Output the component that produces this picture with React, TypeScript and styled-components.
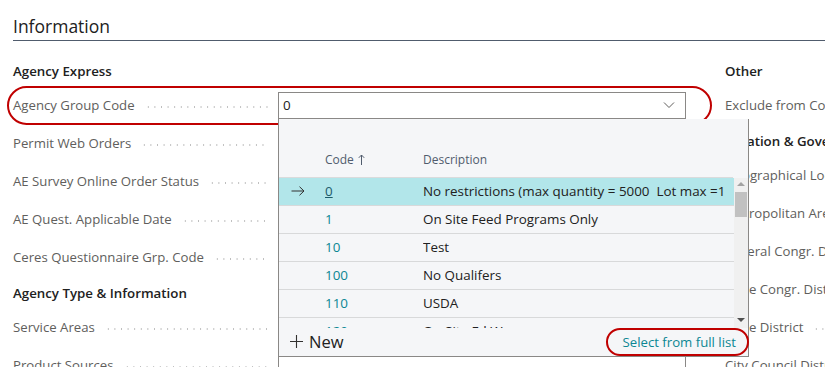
import React from 'react';
import styled, {createGlobalStyle} from 'styled-components';

const GlobalStyle = createGlobalStyle`
  body {
    margin: 0;
    font-family: "Open Sans", "Noto Sans", sans-serif;
    background: #fff;
  }
`;

const leftGroups = [
    {
        title: 'Agency Express',
        fields: ['Agency Group Code', 'Permit Web Orders', 'AE Survey Online Order Status', 'AE Quest. Applicable Date', 'Ceres Questionnaire Grp. Code'],
    },
    {
        title: 'Agency Type & Information',
        fields: ['Service Areas', 'Product Sources'],
    },
];

const rightGroups = [
    {title: 'Other', fields: ['Exclude from Communications']},
    {
        title: 'Location & Government',
        fields: ['Geographical Location', 'Metropolitan Area', 'Federal Congr. District', 'State Congr. District', 'State District', 'City Council District'],
    },
];

const lookupRows = [
    {code: '0', description: 'No restrictions (max quantity = 5000  Lot max =1'},
    {code: '1', description: 'On Site Feed Programs Only'},
    {code: '10', description: 'Test'},
    {code: '100', description: 'No Qualifers'},
    {code: '110', description: 'USDA'},
    {code: '120', description: 'On Site Fd W'},
];

const ChevronDown = () => (
    <svg width="12" height="8" viewBox="0 0 12 8">
        <polyline points="1,1.5 6,6.5 11,1.5" fill="none" stroke="#605e5c" strokeWidth="1"/>
    </svg>
);

const ArrowUp = () => (
    <svg width="7" height="11" viewBox="0 0 7 11">
        <path d="M3.5 1 V11 M0.8 3.8 L3.5 1 L6.2 3.8" fill="none" stroke="#505c6d" strokeWidth="1"/>
    </svg>
);

const ArrowRight = () => (
    <svg width="14" height="10" viewBox="0 0 14 10">
        <path d="M0.5 5 H13 M8.5 0.7 L13 5 L8.5 9.3" fill="none" stroke="#323130" strokeWidth="1"/>
    </svg>
);

const PlusIcon = () => (
    <svg width="13" height="13" viewBox="0 0 13 13">
        <path d="M6.5 0 V13 M0 6.5 H13" fill="none" stroke="#323130" strokeWidth="1.1"/>
    </svg>
);

const LookupPopup = () => (
    <Popup>
        <PopupHeader>
            <span/>
            <HeaderCell>Code <ArrowUp/></HeaderCell>
            <HeaderCell>Description</HeaderCell>
        </PopupHeader>
        <ListArea>
            <Rows>
                {lookupRows.map((row, i) => (
                    <Row key={row.code} $selected={i === 0}>
                        <Marker>{i === 0 && <ArrowRight/>}</Marker>
                        <Code $selected={i === 0}>{row.code}</Code>
                        <Description>{row.description}</Description>
                    </Row>
                ))}
            </Rows>
            <Scrollbar>
                <ScrollArrow $up/>
                <Thumb/>
                <ScrollArrow/>
            </Scrollbar>
        </ListArea>
        <PopupFooter>
            <NewButton><PlusIcon/>New</NewButton>
            <FullListLink>Select from full list</FullListLink>
        </PopupFooter>
    </Popup>
);

const Field = ({label, active}: { label: string, active?: boolean }) => (
    <FieldRow>
        <Caption>
            <span>{label}</span>
            <Leader/>
        </Caption>
        <InputBox>
            {active && <>
                <span>0</span>
                <ChevronDown/>
            </>}
            {active && <LookupPopup/>}
        </InputBox>
        {active && <Highlight/>}
    </FieldRow>
);

export default function App() {
    return (
        <Page>
            <GlobalStyle/>
            <Title>Information</Title>
            <Columns>
                <LeftColumn>
                    {leftGroups.map(group => (
                        <div key={group.title}>
                            <GroupTitle>{group.title}</GroupTitle>
                            {group.fields.map(f => (
                                <Field key={f} label={f} active={f === 'Agency Group Code'}/>
                            ))}
                        </div>
                    ))}
                </LeftColumn>
                <RightColumn>
                    {rightGroups.map(group => (
                        <div key={group.title}>
                            <GroupTitle>{group.title}</GroupTitle>
                            {group.fields.map(f => (
                                <PlainField key={f}>
                                    <span>{f}</span>
                                    <Leader/>
                                </PlainField>
                            ))}
                        </div>
                    ))}
                </RightColumn>
            </Columns>
        </Page>
    );
}

const Page = styled.div`
  width: 825px;
  height: 367px;
  overflow: hidden;
  padding-left: 13px;
  box-sizing: border-box;
  position: relative;
`

const Title = styled.h1`
  margin: 0 0 13px;
  padding-top: 13px;
  font-size: 17.5px;
  line-height: 27px;
  font-weight: 400;
  color: #212121;
  border-bottom: 1px solid #505c6d;
`

const Columns = styled.div`
  display: flex;
  gap: 39px;
`

const LeftColumn = styled.div`
  width: 673px;
  flex: none;
  position: relative;
  z-index: 2;
`

const RightColumn = styled.div`
  width: 260px;
  flex: none;
`

const GroupTitle = styled.div`
  height: 32px;
  padding-top: 7px;
  box-sizing: border-box;
  font-size: 13.3px;
  line-height: 20px;
  font-weight: 600;
  color: #212121;
  white-space: nowrap;
`

const FieldRow = styled.div`
  position: relative;
  height: 38px;
  display: flex;
  align-items: center;
  gap: 10px;
`

const Caption = styled.div`
  width: 255px;
  flex: none;
  display: flex;
  align-items: center;
  font-size: 13.2px;
  color: #605e5c;
  white-space: nowrap;
`

const PlainField = styled(Caption)`
  height: 38px;
  width: 200px;
`

const Leader = styled.span`
  flex: 1;
  height: 2px;
  margin: 3px 0 0 10px;
  background-image: radial-gradient(circle, #bdbdbd 0.7px, transparent 0.9px);
  background-size: 6.6px 2px;
  background-repeat: repeat-x;
`

const InputBox = styled.div`
  position: relative;
  width: 408px;
  height: 27px;
  box-sizing: border-box;
  border: 1px solid #8a8886;
  background: #fff;
  display: flex;
  align-items: center;
  justify-content: space-between;
  padding: 0 10px 0 4px;
  font-size: 13.4px;
  color: #212121;
`

const Highlight = styled.div`
  position: absolute;
  left: -6px;
  top: 0;
  width: 705px;
  height: 39px;
  box-sizing: border-box;
  border: 2.5px solid #c00000;
  border-radius: 20px;
  pointer-events: none;
`

const Popup = styled.div`
  position: absolute;
  left: -1px;
  top: 26px;
  width: 471px;
  height: 238px;
  box-sizing: border-box;
  background: #f5f6f8;
  border: 1px solid #8a8886;
  border-top: none;
  display: flex;
  flex-direction: column;
  z-index: 5;
`

const PopupHeader = styled.div`
  height: 59px;
  flex: none;
  display: grid;
  grid-template-columns: 46px 98px 1fr;
  align-items: end;
  padding-bottom: 8px;
  box-sizing: border-box;
  margin-right: 15px;
  border-bottom: 1px solid #dadbdc;
`

const HeaderCell = styled.span`
  font-size: 12px;
  line-height: 18px;
  color: #505c6d;
  display: flex;
  align-items: center;
  gap: 4px;
`

const ListArea = styled.div`
  height: 150px;
  flex: none;
  display: flex;
  overflow: hidden;
`

const Rows = styled.div`
  flex: 1;
  min-width: 0;
`

const Row = styled.div<{ $selected?: boolean }>`
  height: 28px;
  box-sizing: border-box;
  display: grid;
  grid-template-columns: 46px 98px 1fr;
  align-items: center;
  border-bottom: 1px solid #d8d9da;
  background: ${p => p.$selected ? '#b2e6ea' : 'transparent'};
  font-size: 13.4px;
`

const Marker = styled.span`
  display: flex;
  padding-left: 12px;
`

const Code = styled.span<{ $selected?: boolean }>`
  color: ${p => p.$selected ? '#1d5b6a' : '#0b8793'};
  text-decoration: ${p => p.$selected ? 'underline' : 'none'};
`

const Description = styled.span`
  color: #212121;
  white-space: pre;
  overflow: hidden;
`

const Scrollbar = styled.div`
  width: 14px;
  flex: none;
  background: #f0f0f0;
  display: flex;
  flex-direction: column;
  align-items: center;
  padding: 4px 0 6px;
  box-sizing: border-box;
`

const ScrollArrow = styled.span<{ $up?: boolean }>`
  width: 0;
  height: 0;
  border-left: 4px solid transparent;
  border-right: 4px solid transparent;
  ${p => p.$up
    ? 'border-bottom: 4px solid #a3a3a3;'
    : 'border-top: 4px solid #505050; margin-top: auto;'}
`

const Thumb = styled.span`
  width: 12px;
  height: 25px;
  margin-top: 6px;
  background: #c1c1c1;
`

const PopupFooter = styled.div`
  flex: 1;
  display: flex;
  align-items: center;
  justify-content: space-between;
  padding: 0 12px 0 11px;
`

const NewButton = styled.span`
  display: flex;
  align-items: center;
  gap: 6px;
  font-size: 16.5px;
  color: #212121;
`

const FullListLink = styled.span`
  position: relative;
  font-size: 13.2px;
  color: #0b8793;

  &::after {
    content: '';
    position: absolute;
    inset: -5px -13px -5px -17px;
    border: 2.5px solid #c00000;
    border-radius: 16px;
  }
`
